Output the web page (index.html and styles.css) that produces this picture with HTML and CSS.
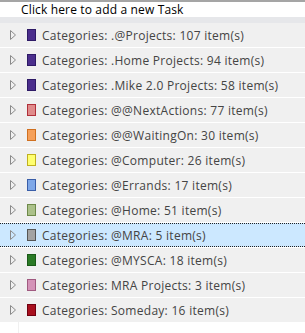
FILE: index.html
```html
<!DOCTYPE html>
<html lang="en">
<head>
    <meta charset="UTF-8">
    <meta name="viewport" content="width=device-width, initial-scale=1.0">
    <title>Tasks</title>
    <link rel="stylesheet" href="styles.css">
</head>
<body>
    <div class="container">
        <div class="new-task">Click here to add a new Task</div>
        <div class="band"></div>
        <div class="groups">
            <div class="group"><svg class="arrow" viewBox="0 0 6 10"><path d="M0.5 0.5 L5.5 5 L0.5 9.5 Z"/></svg><span class="swatch purple"></span>Categories: .@Projects: 107 item(s)</div>
            <div class="group"><svg class="arrow" viewBox="0 0 6 10"><path d="M0.5 0.5 L5.5 5 L0.5 9.5 Z"/></svg><span class="swatch purple"></span>Categories: .Home Projects: 94 item(s)</div>
            <div class="group"><svg class="arrow" viewBox="0 0 6 10"><path d="M0.5 0.5 L5.5 5 L0.5 9.5 Z"/></svg><span class="swatch purple"></span>Categories: .Mike 2.0 Projects: 58 item(s)</div>
            <div class="group"><svg class="arrow" viewBox="0 0 6 10"><path d="M0.5 0.5 L5.5 5 L0.5 9.5 Z"/></svg><span class="swatch salmon"></span>Categories: @@NextActions: 77 item(s)</div>
            <div class="group"><svg class="arrow" viewBox="0 0 6 10"><path d="M0.5 0.5 L5.5 5 L0.5 9.5 Z"/></svg><span class="swatch orange"></span>Categories: @@WaitingOn: 30 item(s)</div>
            <div class="group"><svg class="arrow" viewBox="0 0 6 10"><path d="M0.5 0.5 L5.5 5 L0.5 9.5 Z"/></svg><span class="swatch yellow"></span>Categories: @Computer: 26 item(s)</div>
            <div class="group"><svg class="arrow" viewBox="0 0 6 10"><path d="M0.5 0.5 L5.5 5 L0.5 9.5 Z"/></svg><span class="swatch blue"></span>Categories: @Errands: 17 item(s)</div>
            <div class="group"><svg class="arrow" viewBox="0 0 6 10"><path d="M0.5 0.5 L5.5 5 L0.5 9.5 Z"/></svg><span class="swatch olive"></span>Categories: @Home: 51 item(s)</div>
            <div class="group selected"><svg class="arrow" viewBox="0 0 6 10"><path d="M0.5 0.5 L5.5 5 L0.5 9.5 Z"/></svg><span class="swatch gray"></span>Categories: @MRA: 5 item(s)</div>
            <div class="group"><svg class="arrow" viewBox="0 0 6 10"><path d="M0.5 0.5 L5.5 5 L0.5 9.5 Z"/></svg><span class="swatch green"></span>Categories: @MYSCA: 18 item(s)</div>
            <div class="group"><svg class="arrow" viewBox="0 0 6 10"><path d="M0.5 0.5 L5.5 5 L0.5 9.5 Z"/></svg><span class="swatch pink"></span>Categories: MRA Projects: 3 item(s)</div>
            <div class="group"><svg class="arrow" viewBox="0 0 6 10"><path d="M0.5 0.5 L5.5 5 L0.5 9.5 Z"/></svg><span class="swatch maroon"></span>Categories: Someday: 16 item(s)</div>
        </div>
        <div class="tail"></div>
    </div>
</body>
</html>
```

FILE: styles.css
```css
body {
    margin: 0;
    background: #fff;
    font-family: 'Open Sans', 'Noto Sans', Arial, sans-serif;
    font-size: 12px;
}
.container {
    width: 305px;
    height: 333px;
    overflow: hidden;
    border-top: 2px solid #a5a5a5;
    box-sizing: border-box;
}
.new-task {
    height: 15px;
    line-height: 15px;
    padding-left: 21px;
    color: #000;
    letter-spacing: 0.15px;
}
.band {
    height: 6px;
    background: #e6e7ea;
}
.groups {
    display: flex;
    flex-direction: column;
    gap: 1px;
}
.group {
    height: 24px;
    display: flex;
    align-items: center;
    background: #f0f0f0;
    color: #444;
    letter-spacing: 0.28px;
    box-sizing: border-box;
}
.group.selected {
    background: #cce8ff;
    border-top: 1px dotted #222;
    border-bottom: 1px dotted #222;
}
.arrow {
    width: 6px;
    height: 10px;
    margin-left: 10px;
    fill: none;
    stroke: #8a8a8a;
    stroke-width: 1;
}
.swatch {
    width: 9px;
    height: 12px;
    margin-left: 11px;
    margin-right: 6px;
    box-sizing: border-box;
    border: 1px solid;
}
.purple { background: #4b2e8c; border-color: #2e1a66; }
.salmon { background: #e08b8b; border-color: #b0303a; }
.orange { background: #f5a05a; border-color: #d07020; }
.yellow { background: #ffff70; border-color: #c0b020; }
.blue { background: #7fa8e8; border-color: #3a5ea8; }
.olive { background: #abc18a; border-color: #6e8a4a; }
.gray { background: #a3a3a3; border-color: #555; }
.green { background: #2a7a26; border-color: #1a5a18; }
.pink { background: #d493b8; border-color: #a05a80; }
.maroon { background: #a8101e; border-color: #700010; }
.tail {
    height: 11px;
    margin-left: 18px;
    border-left: 1px solid #f0f0f0;
}
```
